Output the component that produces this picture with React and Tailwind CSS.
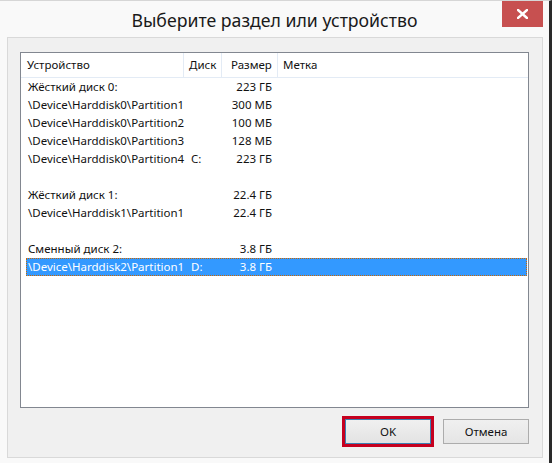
import React from 'react';

// rows of the partition list
const rows = [
  { device: 'Жёсткий диск 0:', disk: '', size: '223 ГБ' },
  { device: '\\Device\\Harddisk0\\Partition1', disk: '', size: '300 МБ' },
  { device: '\\Device\\Harddisk0\\Partition2', disk: '', size: '100 МБ' },
  { device: '\\Device\\Harddisk0\\Partition3', disk: '', size: '128 МБ' },
  { device: '\\Device\\Harddisk0\\Partition4', disk: 'C:', size: '223 ГБ' },
  null,
  { device: 'Жёсткий диск 1:', disk: '', size: '22.4 ГБ' },
  { device: '\\Device\\Harddisk1\\Partition1', disk: '', size: '22.4 ГБ' },
  null,
  { device: 'Сменный диск 2:', disk: '', size: '3.8 ГБ' },
  { device: '\\Device\\Harddisk2\\Partition1', disk: 'D:', size: '3.8 ГБ', selected: true },
];

const Row = ({ row }) => {
  if (!row) return <div className="h-[18px]" />;
  return (
    <div
      className={
        row.selected
          ? 'flex h-[18px] items-center bg-[#3399ff] text-white border border-dotted border-[#cc6600]'
          : 'flex h-[18px] items-center border border-transparent'
      }
    >
      <div className="w-[157px] pl-[1px] whitespace-nowrap">{row.device}</div>
      <div className="w-[38px] pl-[7px]">{row.disk}</div>
      <div className="w-[56px] pr-[6px] text-right whitespace-nowrap">{row.size}</div>
      <div className="flex-1" />
    </div>
  );
};

const App = () => {
  return (
    <div
      className="w-[552px] h-[463px] bg-[#f9f9f9] border-t border-t-[#d6d6d6] border-r-[3px] border-r-[#2a2a2a] flex flex-col text-[#111]"
      style={{ fontFamily: '"Noto Sans", "Open Sans", sans-serif' }}
    >
      {/* Title bar */}
      <div className="h-[36px] grid grid-cols-[1fr_auto_1fr]">
        <div />
        <div className="pt-[7px] text-[17.7px] leading-[24px] text-[#1a1a1a]">Выберите раздел или устройство</div>
        <div className="flex justify-end pr-[6px]">
          <div className="w-[41px] h-[26px] bg-[#c75050] flex items-center justify-center">
            <svg width="11" height="10" viewBox="0 0 11 10">
              <path d="M1 1 L10 9 M10 1 L1 9" stroke="white" strokeWidth="2.4" strokeLinecap="square" />
            </svg>
          </div>
        </div>
      </div>

      {/* Client area */}
      <div className="ml-[7px] mr-[6px] h-[421px] bg-[#f0f0f0] border border-[#d9d9d9] pl-[12px] pr-[13px] pt-[14px] flex flex-col text-[11.5px]">
        {/* List view */}
        <div className="h-[356px] bg-white border border-[#828790] flex flex-col">
          <div className="flex h-[25px] border-b border-[#e3ebf5] items-center">
            <div className="w-[163px] h-full pl-[6px] flex items-center border-r border-[#e3ebf5]">Устройство</div>
            <div className="w-[38px] h-full pl-[5px] flex items-center border-r border-[#e3ebf5]">Диск</div>
            <div className="w-[56px] h-full pl-[9px] flex items-center border-r border-[#e3ebf5]">Размер</div>
            <div className="flex-1 h-full pl-[5px] flex items-center">Метка</div>
          </div>
          <div className="pl-[5px] pr-[1px] flex flex-col">
            {rows.map((r, i) => (
              <Row key={i} row={r} />
            ))}
          </div>
        </div>

        {/* Buttons */}
        <div className="mt-[8px] flex justify-end gap-[9px]">
          <div className="border-[3px] border-[#c5001f]">
            <button className="w-[86px] h-[25px] border border-[#3c7fb1] bg-gradient-to-b from-[#f0f0f0] to-[#e3e3e3] flex items-center justify-center">
              OK
            </button>
          </div>
          <button className="mt-[3px] w-[86px] h-[25px] border border-[#acacac] bg-gradient-to-b from-[#f0f0f0] to-[#e5e5e5] flex items-center justify-center">
            Отмена
          </button>
        </div>
      </div>
    </div>
  );
};

export default App;
